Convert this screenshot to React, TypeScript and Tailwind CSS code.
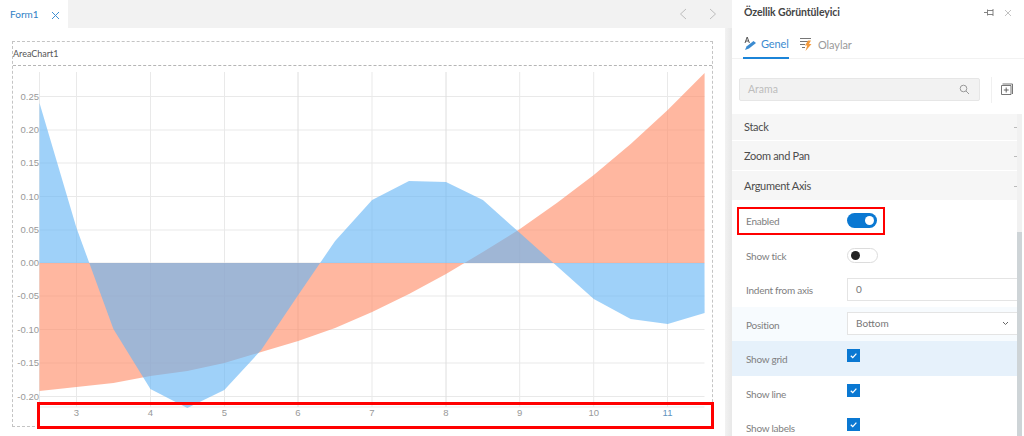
import React from "react";

const xs = Array.from({ length: 19 }, (_, i) => 39.5 + i * 36.95);
const blueY = [103, 228, 329, 389, 408, 390, 350, 295, 241, 200, 181, 182, 200, 233, 266, 299, 319, 324, 313];
const orangeY = [391, 387, 383, 376, 371, 363, 352, 341, 328, 312, 294, 274, 252, 229, 203, 175, 144, 110, 73];
const poly = (ys: number[]) => `39.5,263 ${ys.map((y, i) => `${xs[i].toFixed(1)},${y}`).join(" ")} 704.5,263`;
const hLines = [96.5, 130, 163, 196.5, 230, 263, 296, 329.5, 363, 396.5, 407];
const vLines = [39.5, 76.5, 150.5, 224.5, 298, 372, 446, 519.7, 593.7, 667.5];
const yLabels: [string, number][] = [["0.25", 96.5], ["0.20", 130], ["0.15", 163], ["0.10", 196.5], ["0.05", 230], ["0.00", 263], ["-0.05", 296], ["-0.10", 329.5], ["-0.15", 363], ["-0.20", 396.5]];
const xLabels: [string, number][] = [["3", 76.5], ["4", 150.5], ["5", 224.5], ["6", 298], ["7", 372], ["8", 446], ["9", 519.7], ["10", 593.7], ["11", 667.5]];

function Chart() {
  return (
    <svg width="699" height="360" viewBox="13 66 699 360" className="block">
      {hLines.map((y) => <line key={y} x1="39" x2="704.5" y1={y} y2={y} stroke="#e9e9e9" strokeWidth="1" />)}
      {vLines.map((x) => <line key={x} x1={x} x2={x} y1="72" y2="407" stroke={x === 298 || x === 446 ? "#dedede" : "#e9e9e9"} strokeWidth="1" />)}
      <polygon points={poly(orangeY)} fill="#ff8a65" fillOpacity="0.62" />
      <polygon points={poly(blueY)} fill="#64b5f6" fillOpacity="0.62" />
      {yLabels.map(([t, y]) => <text key={t} x="39" y={y + 3.2} textAnchor="end" fontSize="9.5" fill="#999999" fontFamily="Liberation Sans, sans-serif">{t}</text>)}
      {xLabels.map(([t, x]) => <text key={t} x={x} y="416" textAnchor="middle" fontSize="9.5" fill={t === "11" ? "#5f93bd" : "#999999"} fontFamily="Liberation Sans, sans-serif">{t}</text>)}
    </svg>
  );
}

function Toggle({ on }: { on: boolean }) {
  return on ? (
    <div className="w-[30px] h-[15px] rounded-full bg-[#0a78d2] flex items-center justify-end pr-[3px]">
      <div className="w-[9px] h-[9px] rounded-full bg-white" />
    </div>
  ) : (
    <div className="w-[31px] h-[15px] rounded-full bg-white border border-[#dcdcdc] flex items-center pl-[3px]">
      <div className="w-[9px] h-[9px] rounded-full bg-[#222222]" />
    </div>
  );
}

function Check() {
  return (
    <div className="w-[13px] h-[13px] bg-[#0a78d2] flex items-center justify-center">
      <svg width="9" height="9" viewBox="0 0 10 10" fill="none"><path d="M2 5.2 4.2 7.4 8.2 3" stroke="#fff" strokeWidth="1.4" /></svg>
    </div>
  );
}

function Row({ label, bg, children }: { label: string; bg?: string; children: React.ReactNode }) {
  return (
    <div className={`h-[34.5px] flex items-start pl-[14px] shrink-0 ${bg ?? ""}`}>
      <div className="w-[101px] pt-[11px] text-[10px] tracking-[-0.25px] leading-[14px] text-[#808080]">{label}</div>
      <div className="flex-1">{children}</div>
    </div>
  );
}

function Section({ label, h }: { label: string; h: string }) {
  return (
    <div className={`${h} bg-[#f6f6f6] flex items-center justify-between pl-[12px] pr-[7px] pt-[1px] text-[11px] tracking-[-0.3px] text-[#4d4d4d] mb-[1px] shrink-0`}>
      <span>{label}</span>
      <span className="w-[3px] h-px bg-[#bbbbbb]" />
    </div>
  );
}

export default function App() {
  return (
    <div className="w-[1024px] h-[436px] overflow-hidden relative flex bg-white" style={{ fontFamily: 'Lato, "Open Sans", sans-serif' }}>
      {/* left */}
      <div className="w-[732px] shrink-0 h-full flex flex-col bg-white">
        <div className="h-[28px] flex shrink-0 bg-[#f2f2f2]">
          <div className="w-[68px] bg-white flex items-center pl-[10px] gap-[12px] text-[#2f7fc5] text-[10px]">
            <span>Form1</span>
            <svg width="9" height="9" viewBox="0 0 9 9" fill="none" className="mt-[2px]"><path d="M1 1 8 8M8 1 1 8" stroke="#3f8fd2" strokeWidth="1" /></svg>
          </div>
          <div className="flex-1 flex items-center justify-end gap-[22px] pr-[15px]">
            <svg width="8" height="12" viewBox="0 0 8 12" fill="none"><path d="M7 1 1.5 6 7 11" stroke="#bdbdbd" strokeWidth="1" /></svg>
            <svg width="8" height="12" viewBox="0 0 8 12" fill="none"><path d="M1 1 6.5 6 1 11" stroke="#bdbdbd" strokeWidth="1" /></svg>
          </div>
        </div>
        <div className="flex-1 flex min-h-0">
          <div className="w-[725px] bg-white pl-[12px] pt-[13px]">
            <div className="w-[701px] h-[386px] border border-dashed border-[#c4c4c4]">
              <div className="h-[24px] border-b border-dashed border-[#b5b5b5] flex items-center text-[9px] text-[#555555]">AreaChart1</div>
              <Chart />
            </div>
          </div>
          <div className="flex-1 bg-gradient-to-r from-[#f2f2f2] to-[#e8e8e8]" />
        </div>
      </div>

      {/* right */}
      <div className="flex-1 h-full flex flex-col min-w-0 relative">
        <div className="h-[24px] flex items-center justify-between pl-[12px] pr-[12px] pt-[1px] text-[10.5px] font-bold tracking-[-0.1px] text-[#444444] shrink-0">
          <span>Özellik Görüntüleyici</span>
          <div className="flex items-center gap-[9px]">
            <svg width="11" height="9" viewBox="0 0 11 9" fill="none"><path d="M0 4.5H3M3.5 1.5V7.5M3.5 2.5H9M3.5 6.5H9M9 1V8" stroke="#777" strokeWidth="0.9" /></svg>
            <svg width="8" height="8" viewBox="0 0 8 8" fill="none"><path d="M1 1 7 7M7 1 1 7" stroke="#bbb" strokeWidth="0.9" /></svg>
          </div>
        </div>
        <div className="h-[35px] flex items-stretch pl-[11px] border-b border-[#f2f2f2] shrink-0">
          <div className="w-[46px] shrink-0 flex items-center gap-[4px] border-b-2 border-[#1b84d8] text-[11px] tracking-[-0.1px] text-[#3b8bd0] -mb-[1px] pt-[6px]">
            <svg width="13" height="15" viewBox="0 0 13 15" fill="none" className="ml-[1px] shrink-0">
              <path d="M1 7 3.2 1 5.4 7M1.8 5H4.6" stroke="#555" strokeWidth="1" />
              <path d="M1 14 2.5 10.5 9.5 5 12 7 5 12.5Z" fill="#3b8bd0" />
            </svg>
            <span className="leading-none">Genel</span>
          </div>
          <div className="ml-[11px] flex items-center gap-[6px] text-[11px] tracking-[-0.1px] text-[#9a9a9a] pt-[6px]">
            <svg width="12" height="14" viewBox="0 0 12 14" fill="none" className="shrink-0">
              <path d="M0 1.5H11M0 4.5H8M0 7.5H5M2 10.5H5" stroke="#666" strokeWidth="0.9" />
              <path d="M8 3.5 5 8.5H7.2L5.5 14 11.5 7H9L11 3.5Z" fill="#f39a3c" />
            </svg>
            <span className="leading-none">Olaylar</span>
          </div>
        </div>
        <div className="flex items-start pl-[7px] pt-[19px] h-[55px] shrink-0">
          <div className="w-[241px] h-[23px] bg-[#f2f2f2] border border-[#e6e6e6] rounded-[2px] flex items-center justify-between pl-[8px] pr-[9px] text-[10.5px] text-[#bdbdbd]">
            <span>Arama</span>
            <svg width="11" height="11" viewBox="0 0 11 11" fill="none"><circle cx="4.5" cy="4.5" r="3.3" stroke="#999" /><path d="M7 7 10 10" stroke="#999" /></svg>
          </div>
          <div className="w-px h-[26px] bg-[#f0f0f0] ml-[11px] -mt-[1px]" />
          <svg width="12" height="12" viewBox="0 0 12 12" fill="none" className="ml-[9px] mt-[5px]">
            <path d="M1.5 1H11.5V11M0.5 2.5H10V11.5H0.5Z" stroke="#666" strokeWidth="0.9" />
            <path d="M5.2 4.5V9.5M2.8 7H7.7" stroke="#555" strokeWidth="0.9" />
          </svg>
        </div>
        <Section label="Stack" h="h-[26px]" />
        <Section label="Zoom and Pan" h="h-[29px]" />
        <Section label="Argument Axis" h="h-[29px]" />
        <div className="pt-[2px] flex flex-col">
          <Row label="Enabled"><div className="pt-[10px]"><Toggle on /></div></Row>
          <Row label="Show tick"><div className="pt-[10px]"><Toggle on={false} /></div></Row>
          <Row label="Indent from axis">
            <div className="mt-[6px] h-[23px] border border-[#e4e4e4] flex items-center pl-[8px] text-[10px] text-[#777777] bg-white">0</div>
          </Row>
          <Row label="Position" bg="bg-[#f7fbfe]">
            <div className="mt-[5px] h-[23px] border border-[#e4e4e4] flex items-center justify-between pl-[8px] pr-[14px] text-[10px] text-[#777777] bg-white">
              <span>Bottom</span>
              <svg width="7" height="5" viewBox="0 0 7 5" fill="none"><path d="M1 1 3.5 3.5 6 1" stroke="#666" /></svg>
            </div>
          </Row>
          <Row label="Show grid" bg="bg-[#e6f1fb]"><div className="pt-[8px]"><Check /></div></Row>
          <Row label="Show line"><div className="pt-[8px]"><Check /></div></Row>
          <Row label="Show labels"><div className="pt-[8px]"><Check /></div></Row>
        </div>
      </div>

      {/* white strip right of the scrollbar */}
      <div className="absolute left-[1017px] top-[114px] w-[7px] h-[322px] bg-white flex">
        <div className="w-[5px] h-full bg-[#f1f1f1] flex flex-col justify-end">
          <div className="h-[204px] bg-[#ced4d7]" />
        </div>
      </div>
      {/* annotations */}
      <div className="absolute left-[37px] top-[402px] w-[677px] h-[27px] border-[3px] border-[#ff0000]" />
      <div className="absolute left-[737px] top-[207px] w-[148px] h-[28px] border-2 border-[#ff0000]" />
    </div>
  );
}
